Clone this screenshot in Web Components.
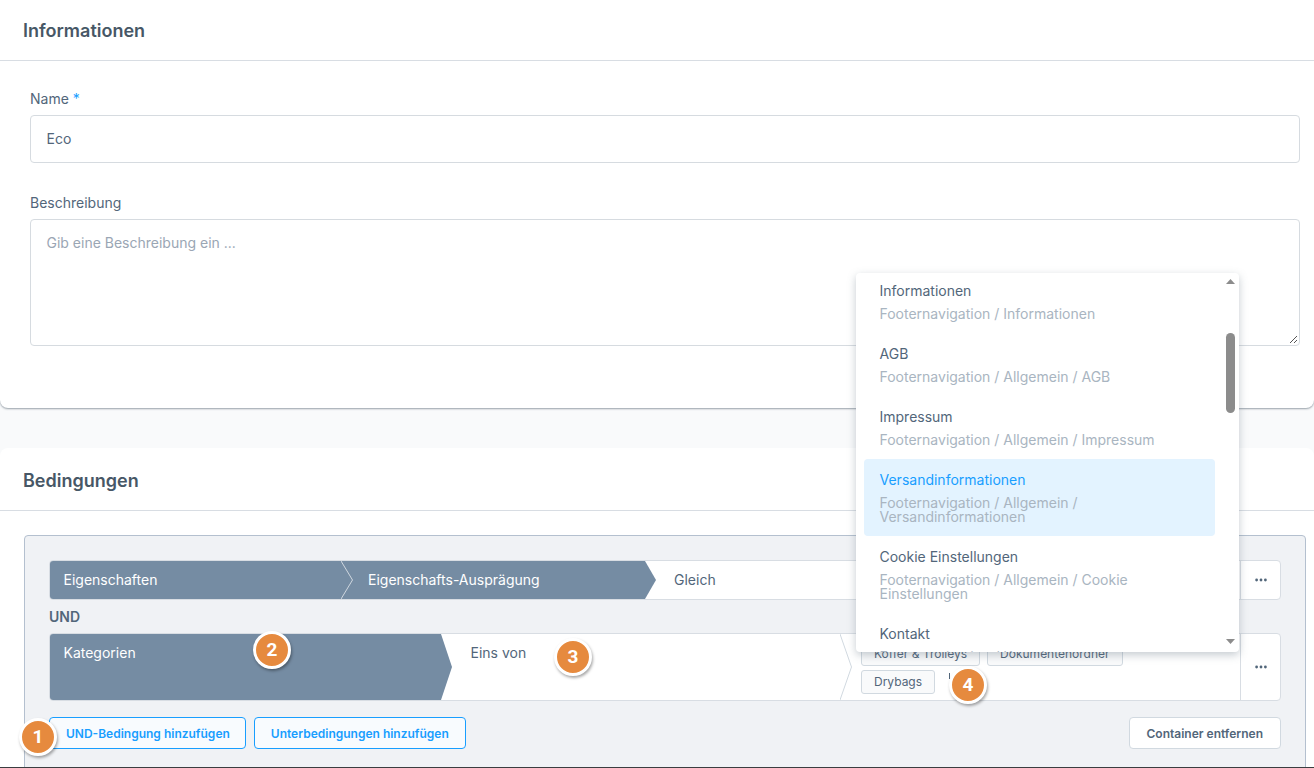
<!DOCTYPE html>
<html lang="de">
<head>
<meta charset="utf-8">
<title>Informationen</title>
<style>
  html, body { margin: 0; padding: 0; }
  body { font-family: Inter, "Liberation Sans", sans-serif; font-size: 14px; color: #52667a; background: #f9fafb; }
</style>
</head>
<body>
<x-page>
  <x-card title="Informationen" kind="first">
    <x-field label="Name" required style="margin-bottom:31px">Eco</x-field>
    <x-field label="Beschreibung" kind="area" placeholder>Gib eine Beschreibung ein ...</x-field>
  </x-card>
  <x-card title="Bedingungen" kind="last">
    <x-container>
      <x-cond-row>
        <x-seg filled style="width:291px">Eigenschaften</x-seg>
        <x-seg filled tip sep style="width:315px;padding-left:27px">Eigenschafts-Ausprägung</x-seg>
        <x-seg style="flex:1;padding-left:18px">Gleich</x-seg>
      </x-cond-row>
      <div style="font-size:14px;font-weight:600;line-height:34px;height:33px">UND</div>
      <x-cond-row>
        <x-seg filled tip style="width:402px">Kategorien</x-seg>
        <x-seg style="width:388px;padding-left:18.5px">Eins von</x-seg>
        <x-seg sep tags style="flex:1">
          <x-tag>Koffer &amp; Trolleys</x-tag>
          <x-tag>Dokumentenordner</x-tag>
          <x-tag>Drybags</x-tag>
          <span style="width:1px;height:6px;background:#52667a;margin:3px 0 0 7px"></span>
        </x-seg>
      </x-cond-row>
      <div style="display:flex;gap:8px;margin-top:16px">
        <x-btn primary style="padding-right:15px">UND-Bedingung hinzufügen</x-btn>
        <x-btn primary>Unterbedingungen hinzufügen</x-btn>
        <x-btn style="margin-left:auto;padding:0 17px">Container entfernen</x-btn>
      </div>
    </x-container>
  </x-card>

  <x-dropdown>
    <x-option name="Informationen">Footernavigation / Informationen</x-option>
    <x-option name="AGB">Footernavigation / Allgemein / AGB</x-option>
    <x-option name="Impressum">Footernavigation / Allgemein / Impressum</x-option>
    <x-option name="Versandinformationen" selected>Footernavigation / Allgemein / Versandinformationen</x-option>
    <x-option name="Cookie Einstellungen">Footernavigation / Allgemein / Cookie Einstellungen</x-option>
    <x-option name="Kontakt">Footernavigation / Kontakt</x-option>
  </x-dropdown>

  <x-badge style="left:19px;top:718px">1</x-badge>
  <x-badge style="left:253px;top:631px">2</x-badge>
  <x-badge style="left:554px;top:638px">3</x-badge>
  <x-badge style="left:949px;top:666px">4</x-badge>
</x-page>

<script>
class Page extends HTMLElement{
  constructor(){
    super()
    this.attachShadow({mode: 'open'})
  }
  connectedCallback(){
    this.shadowRoot.innerHTML = `
      <style>
        :host{
          display: flex;
          flex-direction: column;
          gap: 40px;
          position: relative;
          box-sizing: border-box;
          height: 768px;
          overflow: hidden;
          border-bottom: 1px solid #3a3d40;
        }
      </style>
      <slot></slot>
    `
  }
}

class Card extends HTMLElement{
  constructor(){
    super()
    this.attachShadow({mode: 'open'})
  }
  connectedCallback(){
    this.shadowRoot.innerHTML = `
      <style>
        :host{
          display: block;
          background: #fff;
        }
        :host([kind=first]){
          height: 408px;
          flex: none;
          box-sizing: border-box;
          border-radius: 0 0 8px 8px;
          box-shadow: 0 1px 2px rgba(70,85,100,.55);
        }
        :host([kind=last]){
          flex: 1;
          min-height: 0;
          border-radius: 8px 8px 0 0;
        }
        header{
          height: 60px;
          box-sizing: content-box;
          border-bottom: 1px solid #d8dde3;
          padding-left: 23px;
          font-size: 18px;
          font-weight: 600;
          line-height: 62px;
          color: #475766;
        }
        :host([kind=last]) header{
          height: 62px;
          line-height: 65px;
        }
        #body{
          padding: 24px 8px 0 24px;
        }
        :host([kind=first]) #body{
          padding: 29px 14px 0 30px;
        }
      </style>
      <header>${this.getAttribute('title')}</header>
      <div id="body"><slot></slot></div>
    `
  }
}

class Field extends HTMLElement{
  constructor(){
    super()
    this.attachShadow({mode: 'open'})
  }
  connectedCallback(){
    const star = this.hasAttribute('required') ? ' <span id="star">*</span>' : ''
    this.shadowRoot.innerHTML = `
      <style>
        :host{
          display: block;
          margin-bottom: 32px;
        }
        label{
          display: block;
          font-size: 14px;
          line-height: 18px;
          height: 18px;
          margin-bottom: 7px;
          color: #52667a;
        }
        #star{
          color: #189eff;
        }
        #box{
          position: relative;
          box-sizing: border-box;
          height: 48px;
          border: 1px solid #d6dbe0;
          border-radius: 4px;
          padding: 0 15.5px;
          font-size: 14px;
          line-height: 46px;
          color: #52667a;
          background: #fff;
        }
        :host([kind=area]) #box{
          height: 127px;
          line-height: 18px;
          padding-top: 14px;
          color: #9aa6b4;
        }
        svg{
          position: absolute;
          right: 1px;
          bottom: 1px;
          display: none;
        }
        :host([kind=area]) svg{
          display: block;
        }
      </style>
      <label>${this.getAttribute('label')}${star}</label>
      <div id="box">
        <slot></slot>
        <svg width="9" height="9" viewBox="0 0 9 9" fill="none" stroke="#555" stroke-width="1">
          <path d="M1 8 8 1M5 8 8 5"/>
        </svg>
      </div>
    `
  }
}

class Container extends HTMLElement{
  constructor(){
    super()
    this.attachShadow({mode: 'open'})
  }
  connectedCallback(){
    this.shadowRoot.innerHTML = `
      <style>
        :host{
          display: block;
          background: #f0f2f5;
          border: 1px solid #b4c0cf;
          border-radius: 4px;
          padding: 24px 24px 40px;
        }
      </style>
      <slot></slot>
    `
  }
}

class CondRow extends HTMLElement{
  constructor(){
    super()
    this.attachShadow({mode: 'open'})
  }
  connectedCallback(){
    this.shadowRoot.innerHTML = `
      <style>
        :host{
          display: flex;
          background: #fff;
          border: 1px solid #d8dde3;
          border-radius: 4px;
          overflow: hidden;
          color: #52667a;
        }
        #main{
          display: flex;
          flex: 1;
          min-width: 0;
        }
        #more{
          flex: none;
          box-sizing: border-box;
          width: 40px;
          border-left: 1px solid #d8dde3;
          display: flex;
          align-items: center;
          justify-content: center;
        }
      </style>
      <div id="main"><slot></slot></div>
      <div id="more">
        <svg width="12" height="4" viewBox="0 0 12 4" fill="#52667a">
          <circle cx="1.6" cy="2" r="1.4"/><circle cx="6" cy="2" r="1.4"/><circle cx="10.4" cy="2" r="1.4"/>
        </svg>
      </div>
    `
  }
}

class Seg extends HTMLElement{
  constructor(){
    super()
    this.attachShadow({mode: 'open'})
  }
  connectedCallback(){
    this.shadowRoot.innerHTML = `
      <style>
        :host{
          display: block;
          position: relative;
          box-sizing: border-box;
          flex: none;
          min-height: 38px;
          padding-left: 13.5px;
          font-size: 14px;
          line-height: 38px;
        }
        :host([filled]){
          background: #758ca3;
          color: #fff;
        }
        :host([tip]){
          clip-path: polygon(0 0, calc(100% - 11px) 0, 100% 50%, calc(100% - 11px) 100%, 0 100%);
        }
        :host([tags]){
          min-width: 0;
          padding: 8px 60px 6px 21px;
        }
        #tags{
          display: flex;
          flex-wrap: wrap;
          gap: 4px 7px;
        }
        svg{
          position: absolute;
          left: 0;
          top: 0;
          width: 12px;
          height: 100%;
        }
        path{
          fill: none;
          stroke: #d1d9e0;
          vector-effect: non-scaling-stroke;
        }
        :host([filled]) path{
          stroke: rgba(255,255,255,.65);
        }
      </style>
      ${this.hasAttribute('sep') ? '<svg viewBox="0 0 12 38" preserveAspectRatio="none"><path d="M0 0 11.5 19 0 38"/></svg>' : ''}
      ${this.hasAttribute('tags') ? '<div id="tags"><slot></slot></div>' : '<slot></slot>'}
    `
  }
}

class Tag extends HTMLElement{
  constructor(){
    super()
    this.attachShadow({mode: 'open'})
  }
  connectedCallback(){
    this.shadowRoot.innerHTML = `
      <style>
        :host{
          display: block;
          box-sizing: border-box;
          height: 24px;
          padding: 0 12px;
          background: #f9fafb;
          border: 1px solid #d1d9e0;
          border-radius: 3px;
          font-size: 12px;
          line-height: 22px;
          color: #52667a;
        }
      </style>
      <slot></slot>
    `
  }
}

class Btn extends HTMLElement{
  constructor(){
    super()
    this.attachShadow({mode: 'open'})
  }
  connectedCallback(){
    this.shadowRoot.innerHTML = `
      <style>
        :host{
          display: block;
          box-sizing: border-box;
          height: 32px;
          padding: 0 16px;
          border: 1px solid #d1d9e0;
          border-radius: 4px;
          background: #fff;
          color: #52667a;
          font-size: 12px;
          font-weight: 600;
          line-height: 31px;
          white-space: nowrap;
        }
        :host([primary]){
          border-color: #189eff;
          background: #f8fbfe;
          color: #189eff;
        }
      </style>
      <slot></slot>
    `
  }
}

class Dropdown extends HTMLElement{
  constructor(){
    super()
    this.attachShadow({mode: 'open'})
  }
  connectedCallback(){
    this.shadowRoot.innerHTML = `
      <style>
        :host{
          position: absolute;
          left: 856px;
          top: 273px;
          width: 383px;
          height: 379px;
          display: flex;
          background: #fff;
          border-radius: 4px;
          box-shadow: 0 3px 8px rgba(90,105,120,.35);
          overflow: hidden;
        }
        #list{
          width: 351px;
          margin: -3px 0 0 8px;
          flex: none;
        }
        #bar{
          position: relative;
          width: 9px;
          margin-left: 11px;
        }
        #thumb{
          position: absolute;
          left: 0;
          top: 60px;
          width: 9px;
          height: 80px;
          border-radius: 5px;
          background: #8c8c8c;
        }
        #bar svg{
          position: absolute;
          left: 0;
        }
      </style>
      <div id="list"><slot></slot></div>
      <div id="bar">
        <svg style="top:6px" width="9" height="5" viewBox="0 0 9 5" fill="#8c8c8c"><path d="M4.5 0 9 5H0z"/></svg>
        <div id="thumb"></div>
        <svg style="top:366px" width="9" height="5" viewBox="0 0 9 5" fill="#8c8c8c"><path d="M0 0H9L4.5 5z"/></svg>
      </div>
    `
  }
}

class Option extends HTMLElement{
  constructor(){
    super()
    this.attachShadow({mode: 'open'})
  }
  connectedCallback(){
    this.shadowRoot.innerHTML = `
      <style>
        :host{
          display: block;
          padding: 12px 16px 12px 15.5px;
          border-radius: 4px;
        }
        :host([selected]){
          background: #e3f3ff;
        }
        #name{
          font-size: 14px;
          line-height: 18px;
          margin-bottom: 7px;
          color: #52667a;
        }
        :host([selected]) #name{
          color: #189eff;
        }
        #path{
          font-size: 14px;
          line-height: 14px;
          color: #a9b5c1;
        }
      </style>
      <div id="name">${this.getAttribute('name')}</div>
      <div id="path"><slot></slot></div>
    `
  }
}

class Badge extends HTMLElement{
  constructor(){
    super()
    this.attachShadow({mode: 'open'})
  }
  connectedCallback(){
    this.shadowRoot.innerHTML = `
      <style>
        :host{
          position: absolute;
          box-sizing: border-box;
          width: 38px;
          height: 38px;
          border: 3px solid #fff;
          border-radius: 50%;
          background: #e68a3e;
          box-shadow: 1px 2px 3px rgba(0,0,0,.35);
          color: #fff;
          font-family: Roboto, "Liberation Sans", sans-serif;
          font-size: 19px;
          font-weight: 700;
          line-height: 32px;
          text-align: center;
        }
      </style>
      <slot></slot>
    `
  }
}

customElements.define('x-page', Page)
customElements.define('x-card', Card)
customElements.define('x-field', Field)
customElements.define('x-container', Container)
customElements.define('x-cond-row', CondRow)
customElements.define('x-seg', Seg)
customElements.define('x-tag', Tag)
customElements.define('x-btn', Btn)
customElements.define('x-dropdown', Dropdown)
customElements.define('x-option', Option)
customElements.define('x-badge', Badge)
</script>
</body>
</html>
